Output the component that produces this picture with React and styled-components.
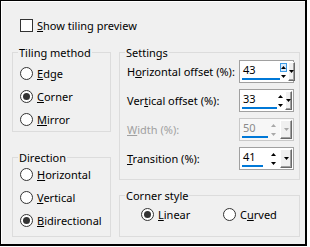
import React from 'react';
import styled, { createGlobalStyle } from 'styled-components';

const Global = createGlobalStyle`
  html, body { margin: 0; padding: 0; background: #fff; }
  body {
    font-family: "Noto Sans", "Open Sans", "DejaVu Sans", sans-serif;
    font-size: 11px;
    color: #000;
  }
  #root { width: 310px; height: 247px; }
`;

const Dialog = styled.div`
  box-sizing: border-box;
  width: 307px;
  height: 246px;
  border-style: solid;
  border-color: #000;
  border-width: 1px 2px 2px 1px;
  background: #f0f0f0;
  box-shadow: inset 1px 1px 0 #fff;
  padding: 18px 0 0 11px;
  display: flex;
  flex-direction: column;
`;

const CheckRow = styled.label`
  display: flex;
  align-items: center;
  gap: 4px;
  height: 13px;
  margin-left: 8px;
  line-height: 13px;
`;

const CheckBox = styled.span`
  box-sizing: border-box;
  width: 13px;
  height: 13px;
  border: 1px solid #333;
  background: #fff;
  flex: none;
`;

const Columns = styled.div`
  display: flex;
  gap: 8px;
  margin-top: 13px;
`;

const Column = styled.div`
  display: flex;
  flex-direction: column;
  width: ${p => p.$w}px;
  gap: ${p => p.$gap}px;
`;

const Group = styled.fieldset`
  margin: 0;
  padding: 0;
  border: 1px solid #dcdcdc;
  min-width: 0;
  box-sizing: border-box;
`;

const Legend = styled.legend`
  margin-left: 5px;
  padding: 0 1px;
  line-height: 15px;
  height: 15px;
`;

const GroupBody = styled.div`
  padding: ${p => p.$pad};
`;

const RadioList = styled.div`
  display: grid;
  grid-auto-rows: 13px;
  row-gap: 10px;
`;

const RadioGrid = styled.div`
  display: grid;
  grid-template-columns: 82px auto;
  grid-auto-rows: 13px;
`;

const RadioRow = styled.label`
  display: flex;
  align-items: center;
  gap: 4px;
  line-height: 13px;
  white-space: nowrap;
`;

const RadioCircle = styled.span`
  box-sizing: border-box;
  width: 13px;
  height: 13px;
  border-radius: 50%;
  border: 1px solid #333;
  background: #fff;
  flex: none;
  display: flex;
  align-items: center;
  justify-content: center;
  &::after {
    content: "";
    width: 7px;
    height: 7px;
    border-radius: 50%;
    background: #333;
    display: ${p => (p.$on ? 'block' : 'none')};
  }
`;

const SettingsList = styled.div`
  display: grid;
  grid-auto-rows: 23px;
  row-gap: 6px;
`;

const SettingRow = styled.div`
  display: flex;
  align-items: center;
  justify-content: space-between;
  color: ${p => (p.$disabled ? '#a0a0a0' : '#000')};
`;

const SpinBox = styled.div`
  box-sizing: border-box;
  width: 55px;
  height: 23px;
  display: flex;
  align-items: stretch;
  border: 1px solid ${p => (p.$disabled ? '#c8c8c8' : '#a0a0a0')};
  background: ${p => (p.$disabled ? '#f7f7f7' : '#fff')};
  padding: 1px;
`;

const ValueArea = styled.div`
  flex: 1;
  display: flex;
  flex-direction: column;
  padding-left: 1px;
  color: ${p => (p.$disabled ? '#8a8a8a' : '#000')};
`;

const ValueText = styled.span`
  line-height: 16px;
  padding-left: 1px;
`;

const Bar = styled.div`
  height: 3px;
  background: #0078d7;
  margin-top: auto;
  margin-bottom: 1px;
`;

const Spinner = styled.div`
  width: 11px;
  display: flex;
  flex-direction: column;
  justify-content: center;
  margin-right: 1px;
`;

const SpinHalf = styled.div`
  box-sizing: border-box;
  height: 9px;
  display: flex;
  align-items: center;
  justify-content: center;
  border: 1px solid ${p => (p.$hot ? '#3c9be6' : 'transparent')};
  background: ${p => (p.$hot ? '#dcecfc' : 'transparent')};
`;

const DropButton = styled.div`
  box-sizing: border-box;
  width: 12px;
  border-style: solid;
  border-width: 1px;
  border-color: #fff #696969 #696969 #fff;
  box-shadow: inset -1px -1px 0 #a0a0a0;
  background: #f0f0f0;
  display: flex;
  align-items: center;
  justify-content: center;
  padding-bottom: 1px;
`;

const Tri = ({ up, color }) => (
  <svg width="5" height="3" viewBox="0 0 5 3">
    <polygon points={up ? '0,3 5,3 2.5,0' : '0,0 5,0 2.5,3'} fill={color} />
  </svg>
);

const Spin = ({ value, bar, hot, disabled }) => {
  const c = disabled ? '#a8a8a8' : '#000';
  return (
    <SpinBox $disabled={disabled}>
      <ValueArea $disabled={disabled}>
        <ValueText>{value}</ValueText>
        <Bar style={{ width: bar }} />
      </ValueArea>
      <Spinner>
        <SpinHalf $hot={hot}><Tri up color={c} /></SpinHalf>
        <SpinHalf><Tri color={c} /></SpinHalf>
      </Spinner>
      <DropButton><Tri color={c} /></DropButton>
    </SpinBox>
  );
};

const Radio = ({ on, children }) => (
  <RadioRow>
    <RadioCircle $on={on} />
    <span>{children}</span>
  </RadioRow>
);

export default function App() {
  return (
    <>
      <Global />
      <Dialog>
        <CheckRow>
          <CheckBox />
          <span><u>S</u>how tiling preview</span>
        </CheckRow>
        <Columns>
          <Column $w={99} $gap={18}>
            <Group>
              <Legend>Tiling method</Legend>
              <GroupBody $pad="7px 0 5px 7px">
                <RadioList>
                  <Radio><u>E</u>dge</Radio>
                  <Radio on><u>C</u>orner</Radio>
                  <Radio><u>M</u>irror</Radio>
                </RadioList>
              </GroupBody>
            </Group>
            <Group>
              <Legend>Direction</Legend>
              <GroupBody $pad="3px 0 9px 7px">
                <RadioList>
                  <Radio><u>H</u>orizontal</Radio>
                  <Radio><u>V</u>ertical</Radio>
                  <Radio on><u>B</u>idirectional</Radio>
                </RadioList>
              </GroupBody>
            </Group>
          </Column>
          <Column $w={181} $gap={8}>
            <Group>
              <Legend>Settings</Legend>
              <GroupBody $pad="0 5px 9px 7px">
                <SettingsList>
                  <SettingRow>
                    <span>H<u>o</u>rizontal offset (%):</span>
                    <Spin value="43" bar={38} hot />
                  </SettingRow>
                  <SettingRow>
                    <span>Ver<u>t</u>ical offset (%):</span>
                    <Spin value="33" bar={35} />
                  </SettingRow>
                  <SettingRow $disabled>
                    <span><u>W</u>idth (%):</span>
                    <Spin value="50" bar={26} disabled />
                  </SettingRow>
                  <SettingRow>
                    <span><u>T</u>ransition (%):</span>
                    <Spin value="41" bar={21} />
                  </SettingRow>
                </SettingsList>
              </GroupBody>
            </Group>
            <Group>
              <Legend>Corner style</Legend>
              <GroupBody $pad="5px 0 15px 21px">
                <RadioGrid>
                  <Radio on><u>L</u>inear</Radio>
                  <Radio>C<u>u</u>rved</Radio>
                </RadioGrid>
              </GroupBody>
            </Group>
          </Column>
        </Columns>
      </Dialog>
    </>
  );
}
